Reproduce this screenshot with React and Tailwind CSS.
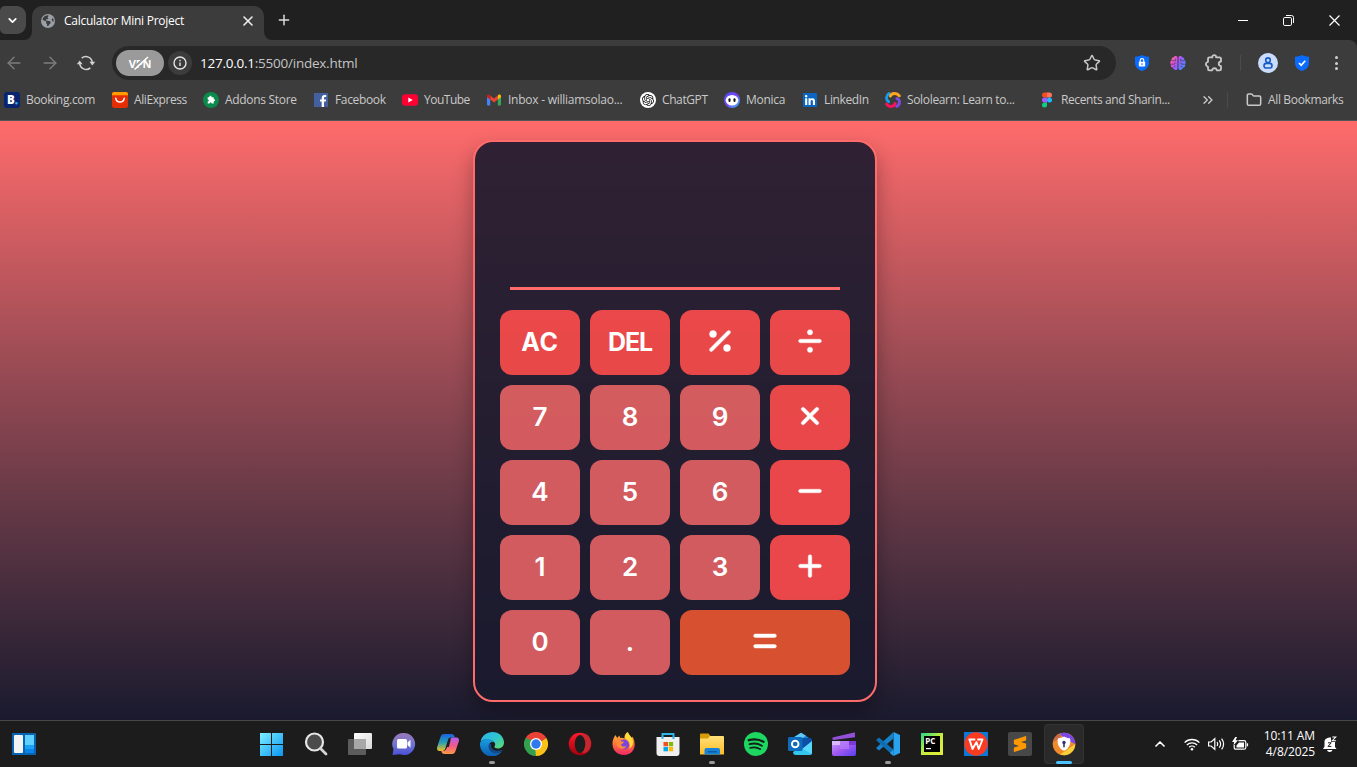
import React from "react";
import {
  FaPercent, FaDivide, FaXmark, FaMinus, FaPlus, FaEquals, FaEarthAmericas, FaLinkedin,
} from "react-icons/fa6";
import { SiOpenai, SiSublimetext } from "react-icons/si";
import { ChevronDown, ChevronUp, X, Plus, ArrowLeft, ArrowRight, Star, ChevronsRight, Folder } from "lucide-react";

/* ---------- bookmark icons ---------- */

const Booking = () => (
  <svg width="16" height="16" viewBox="0 0 16 16">
    <rect width="16" height="16" rx="3" fill="#0a2472" />
    <text x="3" y="12.2" fontSize="11.5" fontWeight="800" fill="#fff" fontFamily="Open Sans, sans-serif">B</text>
    <circle cx="12.4" cy="11.2" r="1.2" fill="#22b6f5" />
  </svg>
);
const AliExpress = () => (
  <svg width="16" height="16" viewBox="0 0 16 16">
    <rect width="16" height="16" rx="2.5" fill="#e62e04" />
    <path d="M0 3.2V2a2 2 0 0 1 2-2h12a2 2 0 0 1 2 2v1.2z" fill="#ff9d00" />
    <path d="M3.8 6.3c.8 5 7.600 5 8.400 0" fill="none" stroke="#fff" strokeWidth="1.5" strokeLinecap="round" />
  </svg>
);
const Addons = () => (
  <svg width="16" height="16" viewBox="0 0 16 16">
    <circle cx="8" cy="8" r="8" fill="#0b8a4b" />
    <path d="M4.700 5.200h1.700C5.900 3.300 9 3.300 8.500 5.200h2.200v2c1.800-.4 1.800 2.400 0 2v2.300H8.600c.3-1.500-2.200-1.500-1.900 0h-2V9.400c1.500.3 1.500-2.100 0-1.900z" fill="#fff" />
  </svg>
);
const Facebook = () => (
  <svg width="16" height="16" viewBox="0 0 16 16">
    <rect x="1" y="1" width="14" height="14" fill="#4460a0" />
    <path d="M8.700 15V9.600H7V7.500h1.700V6c0-2 1.100-3 2.900-3h1.600v2h-1c-.8 0-1.200.4-1.200 1.100v1.400h2.100l-.3 2.100H11V15z" fill="#fff" />
  </svg>
);
const YouTube = () => (
  <svg width="16" height="16" viewBox="0 0 16 16">
    <rect y="2.200" width="16" height="11.500" rx="3" fill="#ff0033" />
    <path d="M6.300 5.500v5l4.400-2.500z" fill="#fff" />
  </svg>
);
const Gmail = () => (
  <svg width="16" height="16" viewBox="0 0 16 16">
    <path d="M1 4v8.500q0 1 1 1h2.200V6.300z" fill="#4285f4" />
    <path d="M15 4v8.500q0 1-1 1h-2.200V6.300z" fill="#34a853" />
    <path d="M4.200 3.600v4L8 10.400l3.800-2.800v-4L8 6.500z" fill="#ea4335" />
    <path d="M1 4.300C1 2.700 2.700 2.200 3.700 3l.5.4v4.200L1 5.200z" fill="#c5221f" />
    <path d="M15 4.300c0-1.600-1.700-2.100-2.700-1.300l-.5.400v4.200L15 5.200z" fill="#fbbc04" />
  </svg>
);
const ChatGPT = () => (
  <span className="flex h-4 w-4 items-center justify-center rounded-full bg-white text-[#111]">
    <SiOpenai size={12} />
  </span>
);
const Monica = () => (
  <svg width="16" height="16" viewBox="0 0 16 16">
    <defs>
      <linearGradient id="mon" x1="0" y1="0" x2="1" y2="1">
        <stop offset="0" stopColor="#4a4dff" /><stop offset=".5" stopColor="#7b45f5" /><stop offset="1" stopColor="#35c5ff" />
      </linearGradient>
    </defs>
    <circle cx="8" cy="8" r="8" fill="url(#mon)" />
    <ellipse cx="8" cy="8.300" rx="6.300" ry="5.200" fill="#fff" />
    <rect x="4.500" y="6.300" width="2" height="3.600" rx="1" fill="#111" />
    <rect x="9.500" y="6.300" width="2" height="3.600" rx="1" fill="#111" />
  </svg>
);
const LinkedIn = () => (
  <span className="relative flex h-4 w-4 items-center justify-center text-[#0a66c2]">
    <span className="absolute inset-[2px] bg-white" />
    <FaLinkedin size={16} className="relative" />
  </span>
);
const Sololearn = () => (
  <svg width="16" height="16" viewBox="0 0 16 16" fill="none" strokeWidth="2.900" strokeLinecap="round">
    <path d="M3.600 9.600C.600 7.500 1 3.400 4.200 1.600" stroke="#149ef2" />
    <path d="M5.400 4.200c.9-3.300 6.500-3.800 8.900-.4" stroke="#ffa51d" />
    <path d="M12 6.600c3.600 1.400 3.200 6.200-.3 7.800" stroke="#7b4ae2" />
    <path d="M1.600 12c2 3.400 7.700 3.300 8.500-.6" stroke="#f5135a" />
  </svg>
);
const Figma = () => (
  <svg width="16" height="16" viewBox="0 0 16 16">
    <path d="M5.500.5H8v5H5.500a2.500 2.500 0 0 1 0-5z" fill="#f24e1e" />
    <path d="M8 .5h2.500a2.500 2.500 0 0 1 0 5H8z" fill="#ff7262" />
    <path d="M5.500 5.500H8v5H5.500a2.500 2.500 0 0 1 0-5z" fill="#a259ff" />
    <circle cx="10.500" cy="8" r="2.500" fill="#1abcfe" />
    <path d="M5.500 10.500H8V13a2.500 2.500 0 1 1-2.500-2.500z" fill="#0acf83" />
  </svg>
);

const bookmarks = [
  ["Booking.com", Booking, "w-[108px]", "tracking-[-0.33px]"],
  ["AliExpress", AliExpress, "w-[91px]", "tracking-[-0.42px]"],
  ["Addons Store", Addons, "w-[110px]", "tracking-[-0.31px]"],
  ["Facebook", Facebook, "w-[89px]", "tracking-[-0.34px]"],
  ["YouTube", YouTube, "w-[84px]", "tracking-[-0.5px]"],
  ["Inbox - williamsolao...", Gmail, "w-[154px]", "tracking-[-0.25px]"],
  ["ChatGPT", ChatGPT, "w-[84px]", "tracking-[-0.4px]"],
  ["Monica", Monica, "w-[78px]", "tracking-[-0.27px]"],
  ["LinkedIn", LinkedIn, "w-[83px]", "tracking-[-0.38px]"],
  ["Sololearn: Learn to...", Sololearn, "w-[154px]", "tracking-[-0.34px]"],
  ["Recents and Sharin...", Figma, "w-[161px]", "tracking-[-0.39px]"],
];

/* ---------- browser chrome ---------- */

function TabStrip() {
  return (
    <div className="flex h-10 bg-[#202020]">
      <div className="flex w-8 shrink-0 items-start pt-[6px]">
        <div className="flex h-7 w-[26px] items-center justify-center rounded-r-[9px] rounded-l-[5px] bg-[#4a4a4a] text-white">
          <ChevronDown size={13} strokeWidth={3.200} className="mr-0.5" />
        </div>
      </div>
      <div className="relative mt-[6px] flex h-[34px] w-[232px] items-center rounded-t-[10px] bg-[#3c3c3c] pb-[5px] pl-[9px]">
        <svg className="absolute bottom-0 -left-2" width="8" height="8"><path d="M8 0v8H0a8 8 0 0 0 8-8z" fill="#3c3c3c" /></svg>
        <svg className="absolute -right-2 bottom-0" width="8" height="8"><path d="M0 0v8h8a8 8 0 0 1-8-8z" fill="#3c3c3c" /></svg>
        <FaEarthAmericas size={14} className="text-[#9aa0a6]" />
        <span className="ml-[9px] w-[176px] text-xs tracking-[-0.26px] whitespace-nowrap text-white">Calculator Mini Project</span>
        <X size={16} strokeWidth={2.400} className="shrink-0 text-[#eee]" />
      </div>
      <div className="flex items-center pl-3"><Plus size={16} strokeWidth={2.200} className="text-[#ddd]" /></div>
      <div className="flex flex-1 justify-end text-white">
        <div className="flex w-[46px] items-center justify-center pl-px"><span className="h-px w-2.5 bg-white" /></div>
        <div className="flex w-[46px] items-center justify-center pl-px">
          <svg width="11" height="11" viewBox="0 0 11 11" fill="none" stroke="#fff"><rect x=".5" y="2.500" width="8" height="8" rx="1.300" /><path d="M3 .5h5.500a2 2 0 0 1 2 2V8" /></svg>
        </div>
        <div className="flex w-[46px] items-center justify-center pl-px">
          <svg width="11" height="11" viewBox="0 0 11 11" stroke="#fff" strokeWidth="1.200"><path d="M.5.500l10 10M10.500.500l-10 10" /></svg>
        </div>
      </div>
    </div>
  );
}

function Shield({ children }) {
  return (
    <svg width="16" height="16" viewBox="0 0 16 16">
      <path d="M8 0c2 1.200 4.500 1.600 7 1.800V8c0 4-3 6.700-7 8-4-1.300-7-4-7-8V1.800C3.500 1.600 6 1.200 8 0z" fill="#0a6cff" />
      {children}
    </svg>
  );
}

function Brain() {
  return (
    <svg width="16" height="16" viewBox="0 0 16 16">
      <linearGradient id="brain" x1="0" y1="0" x2="1" y2="0.600">
        <stop offset="0" stopColor="#ff9a5a" /><stop offset=".3" stopColor="#e84fd0" /><stop offset=".6" stopColor="#9a5cff" /><stop offset="1" stopColor="#4a88ff" />
      </linearGradient>
      <path d="M7.500 2.500C7 .6 4.400.6 3.800 2.300 2 2.500 1.300 4 1.800 5.200 0 6 0 8.500 1 9.300c-.7 1.700.3 3.400 2 3.500.8 2.600 4 2.900 4.500 1zM8.500 2.500C9 .6 11.600.6 12.200 2.300c1.800.2 2.500 1.700 2 2.900C16 6 16 8.500 15 9.300c.7 1.700-.3 3.400-2 3.500-.8 2.600-4 2.900-4.500 1z" fill="url(#brain)" />
      <path d="M2.200 5.700h2.300M5.300 3.700v2.600M1.300 9.200h2.500q1.500 0 1.500-1.500M3.500 12.300l2-1.500M13.800 5.700h-2.300M10.700 3.700v2.600M14.700 9.200h-2.500q-1.500 0-1.500-1.500M12.500 12.300l-2-1.500" fill="none" stroke="#3c3c3c" strokeWidth=".7" />
    </svg>
  );
}

function Toolbar() {
  return (
    <div className="flex h-[46px] items-center rounded-tr-lg bg-[#3c3c3c] text-[#c7c7c7]">
      <div className="flex w-[112px] items-center pl-1">
        <ArrowLeft size={20} strokeWidth={1.700} className="text-[#7c7c7c]" />
        <ArrowRight size={20} strokeWidth={1.700} className="ml-4 text-[#7c7c7c]" />
        <svg className="ml-[17px]" width="18" height="18" viewBox="0 0 18 18" fill="none" stroke="#d0d0d0" strokeWidth="1.600">
          <path d="M4.700 4.200A6.400 6.400 0 0 1 15.300 8.700M13.300 13.800A6.400 6.400 0 0 1 2.700 9.300" />
          <path d="M-.2 10.200l2.900-3.600 2.900 3.600zM12.400 7.800l2.900 3.600 2.900-3.600z" fill="#d0d0d0" stroke="none" />
        </svg>
      </div>
      <div className="flex h-[34px] w-[1004px] items-center rounded-full bg-[#282828] pl-1">
        <div className="flex h-[26px] w-12 items-center justify-center rounded-full bg-[#9a9a9a]">
          <span className="relative text-[11px] leading-none font-bold tracking-[-0.1px] text-white">
            VPN
            <svg className="absolute -top-[2px] left-[4px]" width="18" height="15" viewBox="0 0 18 15">
              <path d="M1.500 11L12.500 1" stroke="#9a9a9a" strokeWidth="2" /><path d="M1.500 13.500L15 1" stroke="#fff" strokeWidth="1.600" />
            </svg>
          </span>
        </div>
        <div className="ml-1 flex h-6 w-6 items-center justify-center rounded-full bg-[#3c3c3c]">
          <svg width="14" height="14" viewBox="0 0 14 14" fill="none" stroke="#e4e4e4" strokeWidth="1.400"><circle cx="7" cy="7" r="6" /><path d="M7 6.400V10M7 3.800v1.400" /></svg>
        </div>
        <div className="ml-2 flex-1 text-[13.500px] tracking-[-0.24px] text-[#c4c4c4]"><span className="text-white">127.0.0.1</span>:5500/index.html</div>
        <Star size={18} strokeWidth={2} className="mr-[15px]" />
      </div>
      <div className="flex items-center pl-[18px]">
        <Shield><rect x="4.800" y="6.800" width="6.400" height="4.700" rx=".8" fill="#fff" /><path d="M6.200 7V5.400a1.800 1.800 0 0 1 3.600 0V7" fill="none" stroke="#fff" strokeWidth="1.200" /><path d="M8 8.200v2" stroke="#0a6cff" /></Shield>
        <span className="ml-5 flex"><Brain /></span>
        <svg className="ml-[18px]" width="20" height="20" viewBox="0 0 20 20" fill="none" stroke="#c7c7c7" strokeWidth="1.800" strokeLinejoin="round">
          <path d="M4 5.700q0-1.300 1.300-1.300h3C8 1.300 12.400 1.300 12.100 4.400h3.300q1.600 0 1.600 1.600v2.500c-3 .4-3 4.200 0 4.600v2.700q0 1.600-1.600 1.600h-2.600c-.4-2.900-4.200-2.900-4.600 0H5.300Q4 17.400 4 16.100v-2.300c-2.900-.9-2.900-4.200 0-5z" />
        </svg>
        <span className="ml-4 h-4 w-px bg-[#4b4b4b]" />
        <span className="ml-[17px] flex h-5 w-5 items-center justify-center rounded-full bg-[#c9dcfb]">
          <svg width="12" height="14" viewBox="0 0 12 14" fill="none" stroke="#1659c7" strokeWidth="1.600"><circle cx="6" cy="4.200" r="2.300" /><path d="M2 9.700q0-2.300 2.300-2.300h3.400q2.300 0 2.300 2.300T7.700 12H4.300Q2 12 2 9.700z" /></svg>
        </span>
        <span className="ml-4 flex"><Shield><path d="M5 8l2.200 2.200L11.200 5.800" stroke="#fff" strokeWidth="1.700" fill="none" /></Shield></span>
        <span className="ml-[25px] flex flex-col gap-[2.500px]">
          <i className="h-[3px] w-[3px] rounded-full bg-[#cfcfcf]" /><i className="h-[3px] w-[3px] rounded-full bg-[#cfcfcf]" /><i className="h-[3px] w-[3px] rounded-full bg-[#cfcfcf]" />
        </span>
      </div>
    </div>
  );
}

function BookmarksBar() {
  return (
    <div className="flex h-[35px] items-start border-b border-[#555] bg-[#3c3c3c] pt-[5px] pl-1 text-xs text-[#c9c9c9]">
      {bookmarks.map(([label, Icon, width, tracking]) => (
        <div key={label} className={`flex h-[18px] shrink-0 items-center gap-[6px] whitespace-nowrap ${width}`}>
          <Icon />
          <span className={tracking}>{label}</span>
        </div>
      ))}
      <div className="flex h-[18px] items-center">
        <ChevronsRight size={16} strokeWidth={2} />
        <span className="ml-[11px] h-4 w-px bg-[#4b4b4b]" />
        <Folder size={16} strokeWidth={2.300} className="ml-[18px]" />
        <span className="ml-[6px] tracking-[-0.35px] whitespace-nowrap">All Bookmarks</span>
      </div>
    </div>
  );
}

/* ---------- calculator ---------- */

const keys = [
  ["AC", "ac"], ["DEL", "del"], [FaPercent, "op"], [FaDivide, "op"],
  ["7"], ["8"], ["9"], [FaXmark, "op"],
  ["4"], ["5"], ["6"], [FaMinus, "op"],
  ["1"], ["2"], ["3"], [FaPlus, "op"],
  ["0"], ["."], [FaEquals, "eq"],
];
const keyStyles = {
  ac: "bg-[#ff4d4d]/90 font-bold text-[25px] tracking-[0.6px] pt-px",
  del: "bg-[#ff4d4d]/90 font-bold text-[25px] tracking-[-1.2px] pt-px",
  op: "bg-[#ff4d4d]/90 pb-[3px]",
  eq: "bg-[#d75131] col-span-2 pb-[3px]",
  num: "bg-[#ff6b6b]/80 font-semibold text-[26px] pb-[2px]",
};

function Calculator() {
  return (
    <div className="h-[562px] w-[404px] rounded-[20px] border-2 border-[#ff6b6b] bg-[#1a1a2e]/90 px-[25px] pb-[25px] shadow-[0_10px_20px_rgba(0,0,0,0.3)]">
      <div className="mx-[10px] h-[148px] border-b-[3px] border-[#ff6b6b]" />
      <div className="mt-5 grid grid-cols-4 gap-[10px]">
        {keys.map(([Key, kind = "num"], i) => (
          <button key={i} className={`flex h-[65px] items-center justify-center rounded-[12px] text-white font-['Inter',sans-serif] ${keyStyles[kind]}`}>
            {typeof Key === "string" ? Key : <Key size={28} className="overflow-visible stroke-white stroke-[8px]" />}
          </button>
        ))}
      </div>
    </div>
  );
}

/* ---------- taskbar icons ---------- */

const Svg = ({ children }) => <svg width="24" height="24" viewBox="0 0 24 24">{children}</svg>;
const G = ({ id, a, b, c, v }) => (
  <linearGradient id={id} x1="0" y1="0" x2={v ? 0 : 1} y2="1">
    <stop offset="0" stopColor={a} />{c && <stop offset=".5" stopColor={c} />}<stop offset="1" stopColor={b} />
  </linearGradient>
);

const Widgets = () => (
  <svg width="24" height="22" viewBox="0 0 24 22">
    <rect width="24" height="22" rx="1" fill="#0963b3" /><rect x="2" y="2" width="9" height="18" rx="1" fill="#f3f3f3" />
    <rect x="13" y="2" width="9" height="10" fill="#5fd0ff" /><rect x="13" y="12" width="9" height="4" fill="#1aa0f5" /><rect x="13" y="16" width="9" height="4" fill="#0a84e8" />
  </svg>
);
const Start = () => (
  <Svg><G id="win" a="#7df0ff" b="#0a95f5" />
    <path fill="url(#win)" d="M0 1h11v11H0zM12 1h11v11H12zM0 13h11v11H0zM12 13h11v11H12z" /></Svg>
);
const Search = () => (
  <Svg><circle cx="10.500" cy="10" r="8.500" fill="#4b4b4b" stroke="#e6e6e6" strokeWidth="2.200" /><path d="M16.500 16.500l5.500 5.500" stroke="#d5d5d5" strokeWidth="2.800" strokeLinecap="round" /></Svg>
);
const TaskView = () => (
  <Svg><G id="tv" a="#fff" b="#d8d8d8" /><rect x="6" y="1" width="18" height="16" rx="1" fill="url(#tv)" /><rect x="0" y="7" width="18" height="16" rx="1" fill="#5c5c5c" /><path d="M6 7h12v10H6z" fill="#a8a8a8" /></Svg>
);
const TeamsChat = () => (
  <Svg><G id="tc" a="#9a78b8" b="#4a50d8" c="#7376d0" v />
    <path d="M12 1a11 11 0 1 1-4 21.200L.500 23l1-6A11 11 0 0 1 12 1z" fill="url(#tc)" />
    <rect x="5" y="7" width="10" height="9.500" rx="1.500" fill="#fff" /><path d="M15.500 10.500l3-2.700v8l-3-2.800z" fill="#fff" /></Svg>
);
const Copilot = () => (
  <Svg><G id="cp1" a="#1b62dd" b="#f3c021" c="#25a0b5" v /><G id="cp2" a="#b260ee" b="#ff9a45" c="#f05a88" v />
    <path d="M8 2h7.500c2 0 2.800 1.300 3.300 3.500h-4c-1.500 0-2.300.8-2.800 2.400L9.500 16c-.6 2-1.500 3-3.500 3H3.500C1.200 19 .6 17 1.200 15L4.500 5C5.200 3 6 2 8 2z" fill="url(#cp1)" />
    <path d="M16 22H8.500c-2 0-2.800-1.300-3.300-3h2c1.500 0 2.800-1 3.300-2.400L14 8c.6-2 1.500-2.500 3.500-2.500h3c2.300 0 2.900 2 2.300 4L19.500 19c-.7 2-1.500 3-3.500 3z" fill="url(#cp2)" /><path d="M12.500 7.400L10.500 15h2.300l2-7.600z" fill="#202020" /></Svg>
);
const Edge = () => (
  <Svg><G id="ed1" a="#2cb4ee" b="#62dd67" c="#2fc5cf" /><G id="ed2" a="#1b9de2" b="#0b5cae" v />
    <path d="M.5 9.500C2 3.500 7 0 12.500 0 19 0 24 4.800 24 10.500c0 3.700-2.700 6-6 6-2.300 0-4-1-3.500-2 1-1.800 1-3-.5-4.500C11 7 4.500 6 .5 9.500z" fill="url(#ed1)" />
    <path d="M.2 10.500C3 6 11 6 14 10c-4.500-.8-6.500 3.500-4.500 7.500 2 3.800 7.500 4.500 12.300 2A12 12 0 0 1 0 12z" fill="url(#ed2)" />
    <path d="M9 12c-1.500 5 3 10 8.500 9.300l4.700-2.600c.5-.3.200-.8-.3-.6C15.500 20.500 10 17 11 12z" fill="#124a91" /></Svg>
);
const Chrome = () => (
  <Svg><path d="M12 12L1.600 6A12 12 0 0 1 22.400 6z" fill="#ea4335" /><path d="M12 12L22.400 6A12 12 0 0 1 12 24z" fill="#fbc116" /><path d="M12 12v12A12 12 0 0 1 1.600 6z" fill="#34a04f" />
    <path d="M12 6h10.400L12 12z" fill="#ea4335" /><path d="M17.200 15L12 24l-1-9z" fill="#fbc116" /><path d="M6.800 15L1.600 6l6 2z" fill="#34a04f" />
    <circle cx="12" cy="12" r="6" fill="#fff" /><circle cx="12" cy="12" r="4.700" fill="#2f78ee" /></Svg>
);
const Opera = () => (
  <Svg><G id="op1" a="#ff1b2d" b="#a0000c" v /><circle cx="12" cy="12" r="11.300" fill="url(#op1)" /><path d="M12 4c5-4 9-1 10 3 1.500 4 1 9-2 12-2.500 2.500-5.500 2.500-8 .5z" fill="#c82730" /><ellipse cx="12" cy="12" rx="5.300" ry="9" fill="#1d1d1d" /></Svg>
);
const Firefox = () => (
  <Svg><G id="ff" a="#ffc63a" b="#f02867" c="#ff7139" v />
    <path d="M2 5.500L3.300 3l2 3 2-2.500 1 2.500c1.500-.4 3-.2 4.200.4C12 3.500 13.500 1.500 15.500 0c.5 3 3 4 4.300 6l.5-1.500c4.700 7 2.700 18.500-8.300 18.500C2 23-2 13.500 2 5.500z" fill="url(#ff)" />
    <path d="M16 0c.5 3 4.500 5 5 9s-2 7-4 8c2-4 .5-8-4-11 .3-2.500 1.300-4.700 3-6z" fill="#ffdb3a" /><circle cx="12" cy="12.500" r="5" fill="#7b45df" /><path d="M4 7.500c3 0 4 .5 5 2h3c-.5 2-2 2-3 3 .5 2.500 3.500 2.500 5.500 1.500-2 4.500-9 3.500-10-1.500z" fill="#ff8a35" /></Svg>
);
const Store = () => (
  <Svg><path d="M6.500 7V2h11v5" fill="none" stroke="#2bb5e9" strokeWidth="2" /><path d="M.5 5h23v16a3 3 0 0 1-3 3h-17a3 3 0 0 1-3-3z" fill="#efefef" /><path d="M5.500 5h2v2h-2zM16.500 5h2v2h-2z" fill="#2bb5e9" />
    <path d="M7.500 10H12v4.300H7.500z" fill="#f25022" /><path d="M12.800 10h4.300v4.300h-4.300z" fill="#7fba00" /><path d="M7.500 15H12v4.300H7.500z" fill="#00a4ef" /><path d="M12.800 15h4.300v4.300h-4.300z" fill="#ffb900" /></Svg>
);
const Explorer = () => (
  <Svg><G id="ex" a="#ffe07a" b="#fcbd25" v /><path d="M0 2.500Q0 1.500 1 1.500h7.500l2 2.500H18v5H0z" fill="#d99a07" /><path d="M0 6.500h8l2-2.500h13q1 0 1 1V22.500H0z" fill="url(#ex)" /><path d="M4.500 22.500V18q0-2 2-2h11.500q2 0 2 2v4.500z" fill="#1683d8" /><path d="M8 19h9v1.500H8z" fill="#0b5aa5" /></Svg>
);
const Spotify = () => (
  <Svg><circle cx="12" cy="12" r="12" fill="#1ed760" /><g fill="none" stroke="#15201a" strokeLinecap="round"><path d="M4.800 8.200c4.700-1.400 10.500-.9 14.700 1.500" strokeWidth="2.300" /><path d="M5.500 12.200c4-1.200 8.700-.7 12.400 1.500" strokeWidth="1.900" /><path d="M6 15.900c3.500-1 7.300-.6 10.400 1.300" strokeWidth="1.600" /></g></Svg>
);
const Outlook = () => (
  <Svg><path d="M3 7l10-6.200L24 8v4H3z" fill="#1490df" /><path d="M4 6.500l9-5.700 5 3-11 7z" fill="#64c8f5" /><path d="M24 8v13q0 2-2 2H8q-3 0-3-3z" fill="#35c6ef" /><path d="M24 9v13L11 15z" fill="#58d9fc" /><path d="M13 6h10l1 3-10 8z" fill="#0b4fa8" /><rect x="0" y="5" width="14.500" height="14" rx="1.500" fill="#0f6cbd" /><circle cx="7.200" cy="12" r="3.300" fill="none" stroke="#fff" strokeWidth="1.900" /></Svg>
);
const Clipchamp = () => (
  <Svg><G id="cc" a="#c89cfa" b="#5440f0" c="#a058f2" /><path d="M.5 5.500L22 .5q1-.2 1 .8v4L1.500 8Q.5 8 .5 7z" fill="#9250d8" /><path d="M0 9h24v13q0 2-2 2H2q-2 0-2-2z" fill="url(#cc)" /><path d="M0 9h8v4H0z" fill="#d9b8ff" /><path d="M8 9h9v8H8z" fill="#b57cf8" opacity=".7" /><path d="M17 9h7v4h-7z" fill="#7b3ad6" /></Svg>
);
const VSCode = () => (
  <Svg><path d="M17.500 0L24 3v18l-6.500 3z" fill="#2aa3ee" /><path d="M17.500 0v6.500L3 18.500.5 16.500Q0 16 .5 15.500z" fill="#1680c8" /><path d="M17.500 24v-6.500L3 5.500.5 7.500Q0 8 .5 8.500z" fill="#0f6db2" /><path d="M17.500 17.500V24L14 21z" fill="#2aa3ee" /></Svg>
);
const PyCharm = () => (
  <Svg><G id="pc" a="#21d789" b="#e8ec3a" c="#c6ee3c" /><path d="M1 1h22v22H1z" fill="url(#pc)" /><path d="M4 4h16v16H4z" fill="#000" />
    <text x="5.300" y="11.800" fontSize="8" fontWeight="700" fill="#fff" fontFamily="Open Sans, sans-serif">PC</text><path d="M6 16h5v1.200H6z" fill="#fff" /></Svg>
);
const Wps = () => (
  <Svg><path d="M0 0h24v24H0z" fill="#0a78d4" /><circle cx="12" cy="12" r="11.700" fill="#fb3a22" /><path d="M4.500 7.500h6.800M5.500 7.500l3 9.500 4-7 2.200 7L18.500 7.500h-5.200" fill="none" stroke="#fff" strokeWidth="1.900" strokeLinejoin="round" /></Svg>
);
const Sublime = () => (
  <span className="flex h-6 w-6 items-center justify-center rounded-[2px] bg-[#484848] text-[#ff9800]"><SiSublimetext size={16} /></span>
);
const SecureBrowser = () => (
  <Svg><circle cx="12" cy="12" r="11.300" fill="#f08a2c" /><path d="M7 2A11.300 11.300 0 0 1 23.300 12L17 9z" fill="#7a48e8" /><path d="M23.300 12A11.300 11.300 0 0 1 8 22.500l9-6z" fill="#f7d038" /><path d="M1 10A11.300 11.300 0 0 1 9 1.200L8 6z" fill="#c86a4a" />
    <path d="M12 4.500c2 1.300 4 1.700 6 1.800 1.500 6-1.500 10.700-6 12.500-4.500-1.800-7.500-6.500-6-12.500 2-.1 4-.5 6-1.800z" fill="#fff" /><circle cx="12" cy="10.500" r="1.700" fill="#38306a" /><path d="M11.200 11h1.600v4.300h-1.600z" fill="#38306a" /></Svg>
);

const apps = [
  [Start], [Search], [TaskView], [TeamsChat], [Copilot], [Edge, "open"], [Chrome], [Opera], [Firefox], [Store],
  [Explorer, "open"], [Spotify], [Outlook], [Clipchamp], [VSCode, "open"], [PyCharm], [Wps], [Sublime], [SecureBrowser, "active"],
];

function Taskbar() {
  return (
    <div className="flex h-[47px] border-t border-[#484848] bg-[#1c1c1c] text-white">
      <div className="flex w-[250px] items-center pl-3"><Widgets /></div>
      <div className="flex">
        {apps.map(([Icon, state], i) => (
          <div key={i} className="flex w-11 justify-center pt-[3px]">
            <div className={`relative flex h-10 w-10 shrink-0 items-center justify-center rounded ${state === "active" ? "bg-[#2a2a2a] ring-1 ring-[#333] ring-inset" : ""}`}>
              <Icon />
              {state === "open" && <span className="absolute bottom-0 left-[17px] h-[3px] w-[6px] rounded-full bg-[#9a9a9a]" />}
              {state === "active" && <span className="absolute bottom-0 left-3 h-[3px] w-4 rounded-full bg-[#4cc2ff]" />}
            </div>
          </div>
        ))}
      </div>
      <div className="flex flex-1 items-center pl-[66px]">
        <ChevronUp size={16} strokeWidth={2.600} />
        <svg className="ml-[16px]" width="16" height="13" viewBox="0 0 16 13" fill="none" stroke="#fff" strokeWidth="1.300"><path d="M.6 4.600a10.400 10.400 0 0 1 14.800 0M2.900 7a7.200 7.200 0 0 1 10.200 0M5.200 9.300a4 4 0 0 1 5.600 0" /><circle cx="8" cy="11.300" r="1.300" fill="#fff" stroke="none" /></svg>
        <svg className="ml-[8px]" width="17" height="14" viewBox="0 0 17 14" fill="none" stroke="#fff" strokeWidth="1.200"><path d="M.6 5v4h2.600l3.600 3.400V1.600L3.200 5zM9 5q1.300 2 0 4M11.300 3.300q2.600 3.700 0 7.400M13.600 1.600q4 5.400 0 10.800" /></svg>
        <svg className="ml-[7px]" width="17" height="14" viewBox="0 0 17 14" fill="none" stroke="#fff" strokeWidth="1.200"><path d="M6.500 3.600H12q1.800 0 1.800 1.800v5q0 1.800-1.800 1.800H4q-1.800 0-1.800-1.800V8" /><path d="M14.800 6.300v3h1.300v-3z" fill="#fff" stroke="none" /><path d="M7 5.500h5v5H4.500V8.500z" fill="#fff" stroke="none" /><path d="M3.300 0L0 5h2.200L1.400 8.500 6 3.300H3.600L5 0z" fill="#fff" stroke="none" /></svg>
        <div className="ml-[13px] w-[53px] text-right text-[12px] leading-4 tracking-[-0.1px] whitespace-nowrap"><div>10:11 AM</div><div>4/8/2025</div></div>
        <svg className="ml-[7px]" width="16" height="16" viewBox="0 0 16 16" fill="none">
          <path d="M2.500 10.500V6C2.500 3 4.700 1.500 9 1.500v4.500h4v5l1.500 2H1zM5 14h5.500q-.5 2-2.800 2T5 14z" fill="#fff" />
          <path d="M10.300 1h3.400l-3.400 3.700h3.700" stroke="#fff" strokeWidth="1.100" />
          <path d="M6 6.800h3.200L6 10.400h3.400" stroke="#1c1c1c" strokeWidth="1" />
        </svg>
      </div>
    </div>
  );
}

export default function App() {
  return (
    <div className="flex h-[767px] w-[1357px] flex-col overflow-hidden bg-[#202020] font-['Open_Sans','Noto_Sans',sans-serif]">
      <TabStrip />
      <Toolbar />
      <BookmarksBar />
      <main className="flex h-[599px] items-start overflow-hidden bg-linear-to-b from-[#ff6b6b] to-[#1a1a2e] pt-[19px] pl-[473px]">
        <Calculator />
      </main>
      <Taskbar />
    </div>
  );
}
